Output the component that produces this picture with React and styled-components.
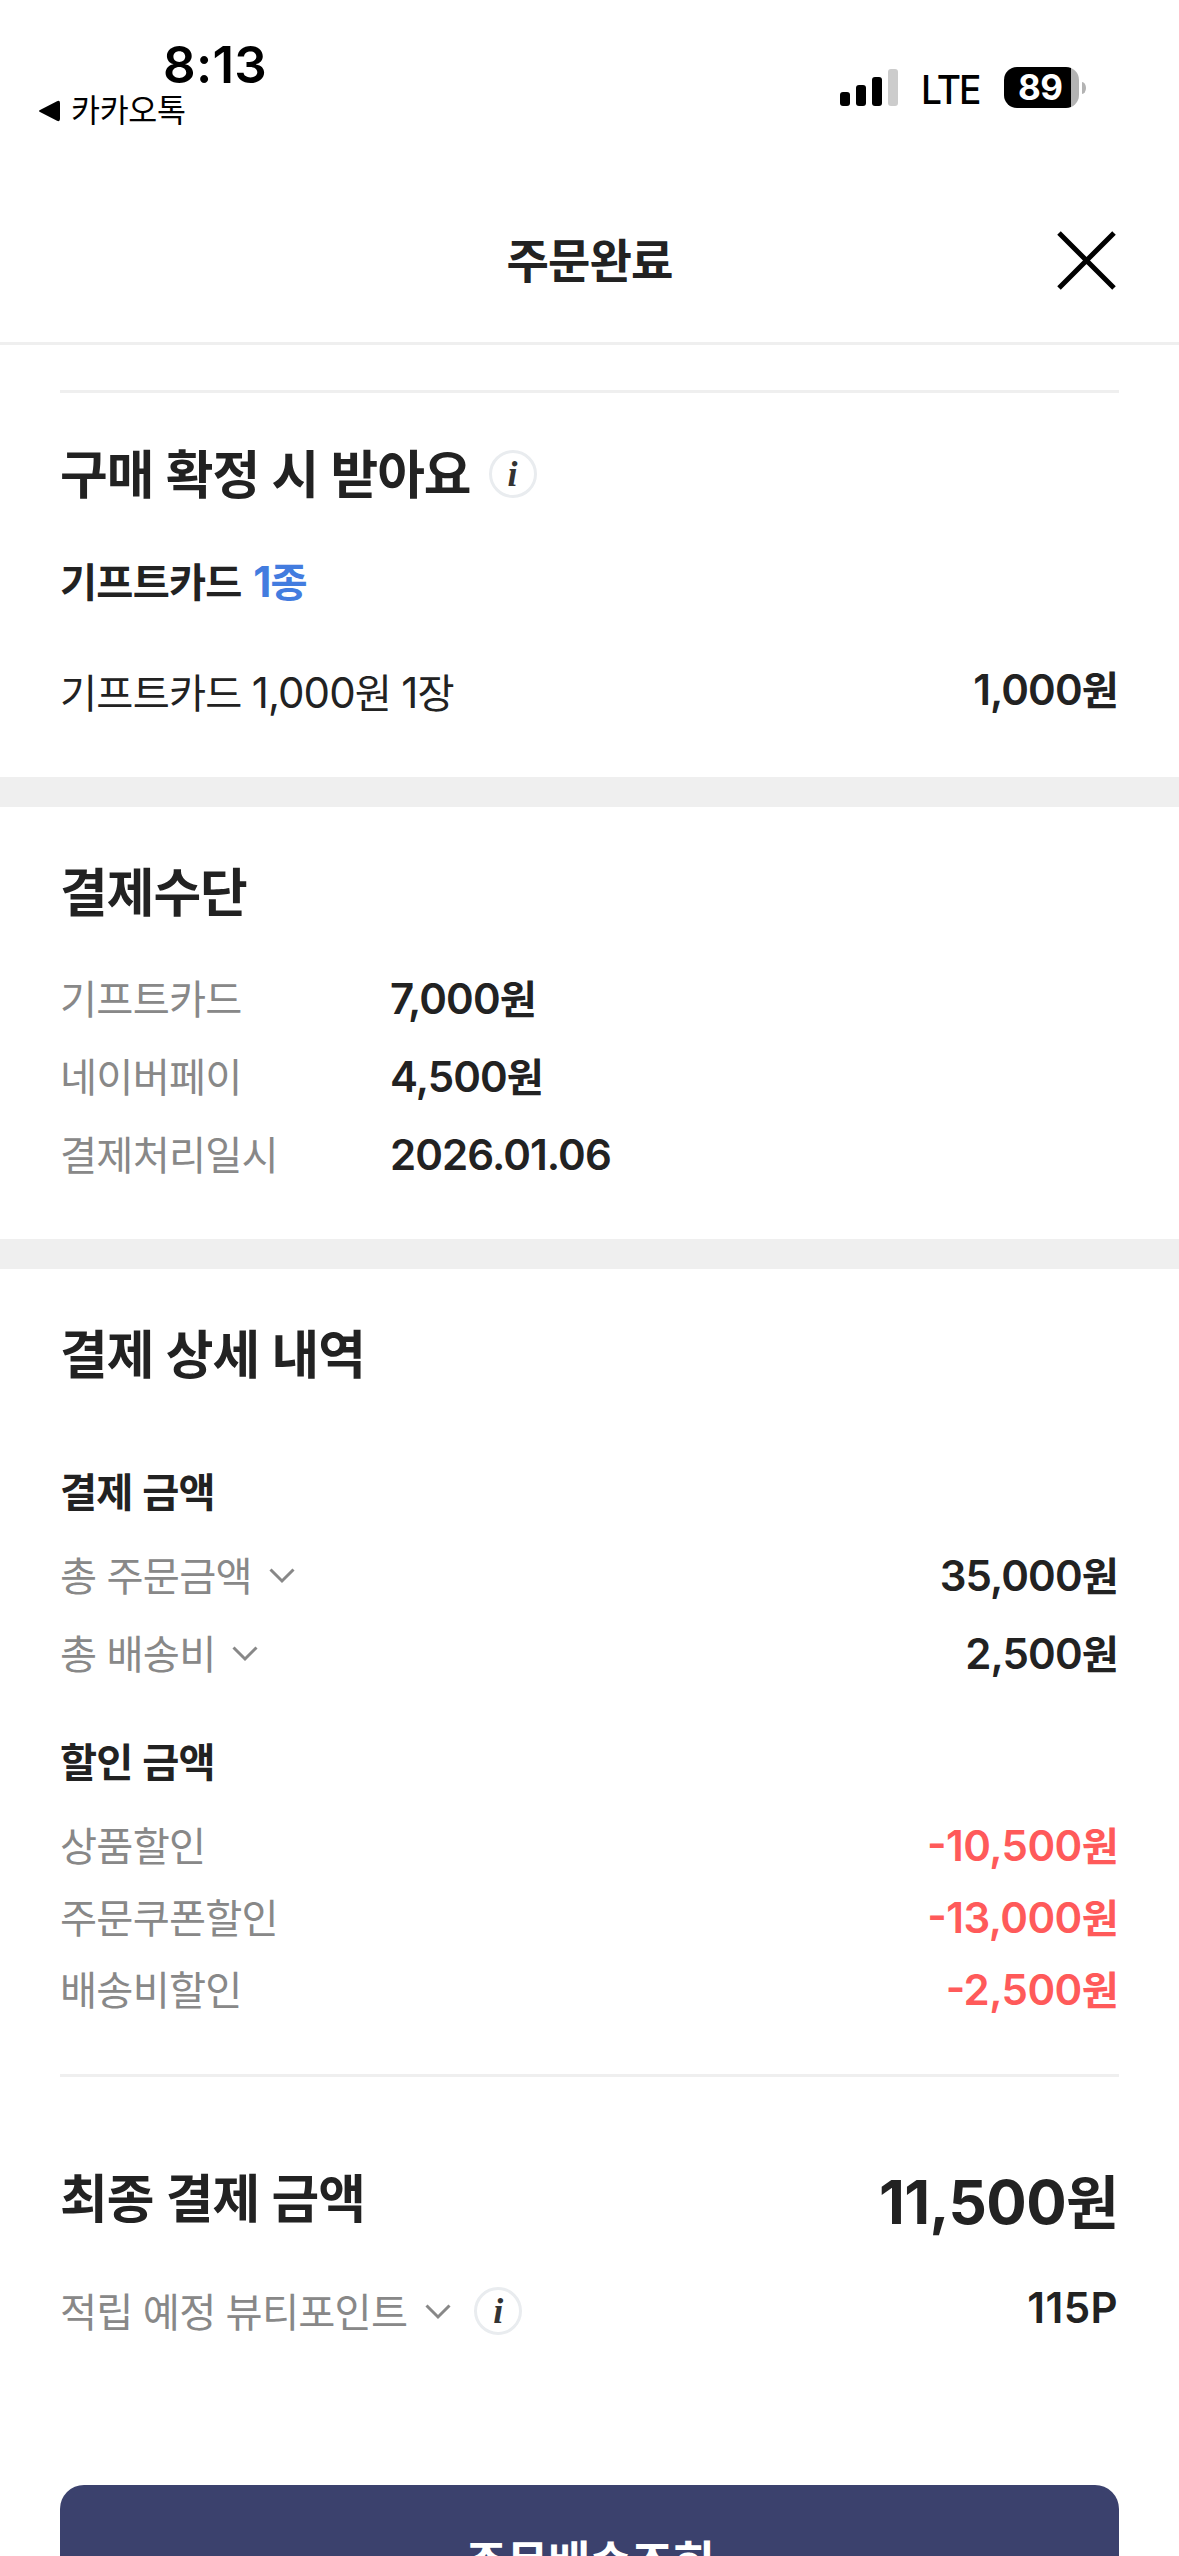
import React from "react";
import styled, { createGlobalStyle } from "styled-components";

const GlobalStyle = createGlobalStyle`
  html, body { margin: 0; padding: 0; background: #fff; }
  body {
    font-family: Inter, "Noto Sans CJK KR", sans-serif;
    color: #222;
    overflow: hidden;
  }
  * { box-sizing: border-box; }
`;

const Screen = styled.main`
  width: 1179px;
  height: 2556px;
  overflow: hidden;
  background: #fff;
  display: flex;
  flex-direction: column;
`;

const LatinRun = styled.span`
  line-height: 1;
  letter-spacing: var(--latin-tracking, -0.022em);
  font-feature-settings: "case" 1;
`;

const HangulRun = styled.span`
  font-size: 0.96em;
  line-height: 1;
  letter-spacing: -0.019em;
  word-spacing: var(--gap, 0.02em);
`;

/* Hangul and Latin runs are sized and tracked separately. */
function Mixed({ children }) {
  const runs = String(children).match(/[\uAC00-\uD7A3 ]+|[^\uAC00-\uD7A3 ]+/g) || [];
  return (
    <span>
      {runs.map((run, i) => {
        const Run = /[\uAC00-\uD7A3 ]/.test(run) ? HangulRun : LatinRun;
        return <Run key={i}>{run}</Run>;
      })}
    </span>
  );
}

const StatusBar = styled.div`
  height: 177px;
  flex: none;
  display: flex;
  justify-content: space-between;
  color: #000;
`;

const StatusLeft = styled.div`
  padding: 35px 0 0 38px;
`;

const Clock = styled.div`
  padding-left: 125px;
  font-size: 51px;
  font-weight: 600;
  line-height: 60px;
  letter-spacing: 0.3px;
`;

const BackLink = styled.div`
  display: flex;
  align-items: center;
  gap: 10px;
  height: 32px;
  font-size: 31.5px;
  line-height: 32px;
  letter-spacing: -0.3px;
`;

const StatusRight = styled.div`
  display: flex;
  align-items: center;
  height: 41px;
  margin: 67px 93px 0 0;
`;

const Bars = styled.div`
  display: flex;
  align-items: flex-end;
  gap: 6px;
  height: 37px;
`;

const Bar = styled.i`
  width: 10px;
  height: ${(p) => p.$h}px;
  border-radius: 3px;
  background: ${(p) => (p.$off ? "#ccc" : "#000")};
`;

const Network = styled.span`
  margin: 4px 0 0 23px;
  width: 62px;
  font-size: 40px;
  line-height: 40px;
  font-weight: 500;
  letter-spacing: -2px;
  transform: scaleX(0.93);
  transform-origin: left center;
`;

const Battery = styled.div`
  margin-left: 21px;
  width: 75px;
  height: 41px;
  border-radius: 13px;
  background: linear-gradient(90deg, #000 67px, #b3b3b3 67px);
  color: #fff;
  font-size: 35px;
  font-weight: 700;
  line-height: 41px;
  padding-left: 14px;
  letter-spacing: -0.5px;
`;

const Nub = styled.i`
  width: 4px;
  height: 12px;
  margin-left: 3px;
  border-radius: 0 4px 4px 0 / 0 6px 6px 0;
  background: #b3b3b3;
`;

const Header = styled.header`
  flex: none;
  height: 168px;
  border-bottom: 3px solid #efefef;
  display: grid;
  grid-template-columns: 1fr auto 1fr;
  align-items: center;
  padding: 0 60px;
`;

const Title = styled.h1`
  grid-column: 2;
  margin: 2px 0 0;
  font-size: 48px;
  line-height: 66px;
  font-weight: 700;
`;

const CloseButton = styled.button`
  justify-self: end;
  border: 0;
  padding: 0;
  margin: 2px 2px 0 0;
  background: none;
  display: flex;
`;

const Section = styled.section`
  flex: none;
  height: ${(p) => p.$h}px;
  padding: ${(p) => p.$top}px 60px 0;
  display: flex;
  flex-direction: column;
`;

const Band = styled.div`
  flex: none;
  height: 30px;
  background: #efefef;
`;

const Divider = styled.hr`
  flex: none;
  width: 100%;
  height: 3px;
  margin: ${(p) => p.$mt || 0}px 0 0;
  border: 0;
  background: #efefef;
`;

const Heading = styled.h2`
  margin: ${(p) => p.$mt || 0}px 0 0;
  height: 66px;
  font-size: 54px;
  line-height: 66px;
  font-weight: 700;
  display: flex;
  align-items: center;
  white-space: pre;
`;

const SubHeading = styled.h3`
  margin: ${(p) => p.$mt || 0}px 0 0;
  height: 60px;
  font-size: 42px;
  line-height: 60px;
  font-weight: 700;
  white-space: pre;
`;

const Accent = styled.span`
  margin-left: 2px;
  color: #437cdf;
`;

const Row = styled.div`
  display: flex;
  align-items: center;
  justify-content: space-between;
  height: ${(p) => p.$h || 78}px;
  margin-top: ${(p) => p.$mt || 0}px;
`;

const PaymentList = styled.div`
  margin-top: 34px;
`;

const Label = styled.span`
  --gap: -0.01em;
  display: flex;
  align-items: center;
  width: ${(p) => (p.$w ? p.$w + "px" : "auto")};
  padding-top: ${(p) => p.$drop || 0}px;
  font-size: 42px;
  line-height: 60px;
  font-weight: 400;
  color: ${(p) => (p.$dark ? "#222" : "#888")};
  white-space: pre;
`;

const Value = styled.span`
  --latin-tracking: ${(p) => p.$tracking || (p.$minus ? "-0.014em" : "-0.022em")};
  flex: ${(p) => (p.$fill ? 1 : "none")};
  padding-right: 1px;
  font-size: ${(p) => (p.$large ? 60 : 42)}px;
  line-height: ${(p) => (p.$large ? 72 : 60)}px;
  font-weight: ${(p) => (p.$large ? 700 : 600)};
  color: ${(p) => (p.$minus ? "#ff5a5a" : "#222")};
`;

const InfoButton = styled.button`
  width: 48px;
  height: 48px;
  margin: 0 0 2px ${(p) => p.$gap}px;
  padding: 0;
  border: 3px solid #e9ecef;
  border-radius: 50%;
  background: #fff;
  color: #333;
  font: italic 700 36px/42px "Liberation Serif", serif;
  text-align: center;
`;

const ChevronSvg = styled.svg`
  margin-left: ${(p) => p.$gap}px;
  flex: none;
`;

const PrimaryButton = styled.button`
  flex: none;
  width: 1059px;
  height: 156px;
  margin: 0 60px;
  border: 0;
  border-radius: 24px;
  background: #3b416d;
  color: #fff;
  font: 700 48px/66px Inter, "Noto Sans CJK KR", sans-serif;
`;

function Chevron({ gap }) {
  return (
    <ChevronSvg $gap={gap} width="26" height="16" viewBox="0 0 26 16" fill="none" stroke="#888" strokeWidth="3">
      <path d="M1.5 1.5 13 13 24.5 1.5" />
    </ChevronSvg>
  );
}

const payments = [
  ["기프트카드", "7,000원"],
  ["네이버페이", "4,500원"],
  ["결제처리일시", "2026.01.06"],
];
const charges = [
  ["총 주문금액", "35,000원"],
  ["총 배송비", "2,500원"],
];
const discounts = [
  ["상품할인", "-10,500원"],
  ["주문쿠폰할인", "-13,000원"],
  ["배송비할인", "-2,500원"],
];

export default function App() {
  return (
    <Screen>
      <GlobalStyle />
      <StatusBar>
        <StatusLeft>
          <Clock>8:13</Clock>
          <BackLink>
            <svg width="23" height="22" viewBox="0 0 23 22">
              <path d="M2 10 19 1.2Q22 0 22 3V19Q22 22 19 20.8L2 12Q0 11 2 10Z" fill="#000" />
            </svg>
            카카오톡
          </BackLink>
        </StatusLeft>
        <StatusRight>
          <Bars>
            <Bar $h={14} />
            <Bar $h={21} />
            <Bar $h={29} />
            <Bar $h={37} $off />
          </Bars>
          <Network>LTE</Network>
          <Battery>89</Battery>
          <Nub />
        </StatusRight>
      </StatusBar>

      <Header>
        <Title><Mixed>주문완료</Mixed></Title>
        <CloseButton aria-label="닫기">
          <svg width="61" height="61" viewBox="0 0 61 61" stroke="#000" strokeWidth="5">
            <path d="M3 3 58 58M58 3 3 58" />
          </svg>
        </CloseButton>
      </Header>

      <Section $h={432} $top={45}>
        <Divider />
        <Heading $mt={49}>
          <Mixed>구매 확정 시 받아요</Mixed>
          <InfoButton $gap={18}>i</InfoButton>
        </Heading>
        <SubHeading $mt={44}>
          <Mixed>기프트카드 </Mixed>
          <Accent><Mixed>1종</Mixed></Accent>
        </SubHeading>
        <Row $mt={39}>
          <Label $dark $drop={6}><Mixed>기프트카드 1,000원 1장</Mixed></Label>
          <Value><Mixed>1,000원</Mixed></Value>
        </Row>
      </Section>
      <Band />

      <Section $h={432} $top={53}>
        <Heading><Mixed>결제수단</Mixed></Heading>
        <PaymentList>
          {payments.map(([name, value]) => (
            <Row key={name}>
              <Label $w={330}><Mixed>{name}</Mixed></Label>
              <Value $fill><Mixed>{value}</Mixed></Value>
            </Row>
          ))}
        </PaymentList>
      </Section>
      <Band />

      <Section $h={1216} $top={53}>
        <Heading><Mixed>결제 상세 내역</Mixed></Heading>
        <SubHeading $mt={74}><Mixed>결제 금액</Mixed></SubHeading>
        {charges.map(([name, value], i) => (
          <Row key={name} $mt={i === 0 ? 15 : 0}>
            <Label><Mixed>{name}</Mixed><Chevron gap={17} /></Label>
            <Value><Mixed>{value}</Mixed></Value>
          </Row>
        ))}
        <SubHeading $mt={39}><Mixed>할인 금액</Mixed></SubHeading>
        {discounts.map(([name, value], i) => (
          <Row key={name} $mt={i === 0 ? 18 : 0} $h={72}>
            <Label><Mixed>{name}</Mixed></Label>
            <Value $minus><Mixed>{value}</Mixed></Value>
          </Row>
        ))}
        <Divider $mt={48} />
        <Row $mt={89} $h={72}>
          <Heading $mt={-6}><Mixed>최종 결제 금액</Mixed></Heading>
          <Value $large $tracking="-0.01em"><Mixed>11,500원</Mixed></Value>
        </Row>
        <Row $mt={40} $h={60}>
          <Label $drop={8}>
            <Mixed>적립 예정 뷰티포인트</Mixed>
            <Chevron gap={18} />
            <InfoButton $gap={23}>i</InfoButton>
          </Label>
          <Value $tracking="0.01em"><Mixed>115P</Mixed></Value>
        </Row>
      </Section>
      <PrimaryButton><Mixed>주문배송조회</Mixed></PrimaryButton>
    </Screen>
  );
}
